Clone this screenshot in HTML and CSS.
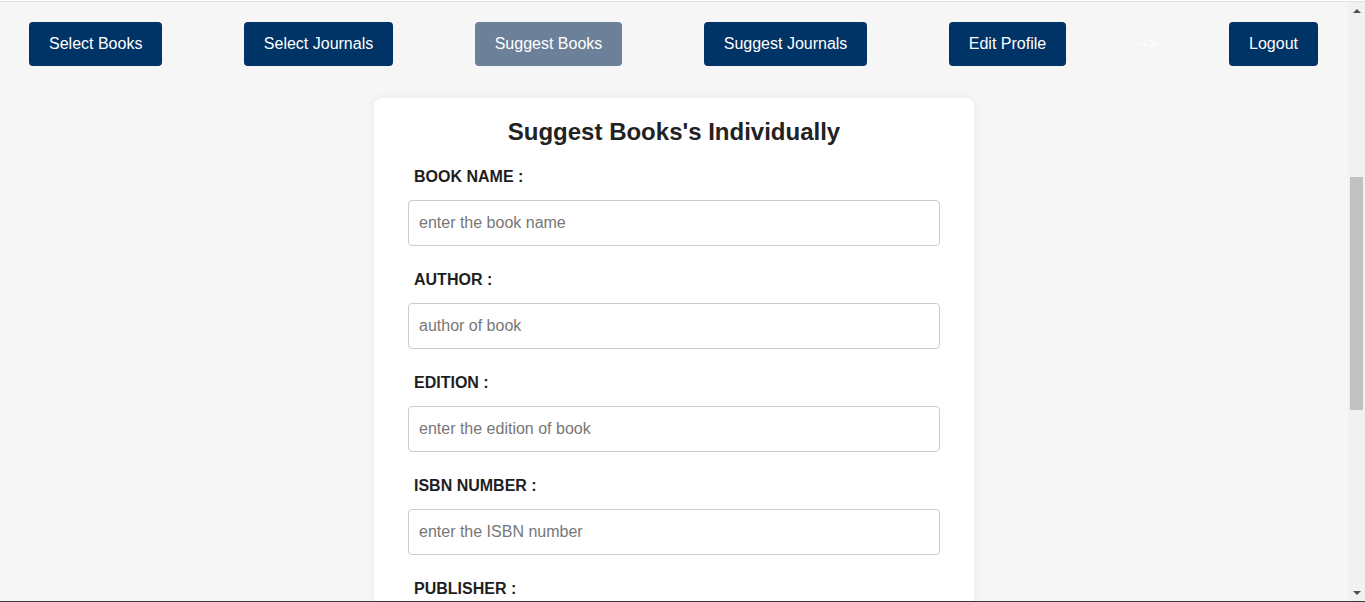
FILE: index.html
```html
<!DOCTYPE html>
<html lang="en">
<head>
<meta charset="utf-8">
<title>Suggest Books</title>
<link rel="stylesheet" href="styles.css">
</head>
<body>
<div class="topline"></div>
<div class="frame">
  <div class="page">
    <nav class="nav">
      <a class="nav-btn" href="#">Select Books</a>
      <a class="nav-btn" href="#">Select Journals</a>
      <a class="nav-btn active" href="#">Suggest Books</a>
      <a class="nav-btn" href="#">Suggest Journals</a>
      <a class="nav-btn" href="#">Edit Profile</a>
      <span class="nav-arrow"><span>--&gt;</span></span>
      <a class="nav-btn" href="#">Logout</a>
    </nav>
    <form class="card">
      <h2 class="card-title">Suggest Books's Individually</h2>
      <div class="field">
        <label class="field-label">BOOK NAME :</label>
        <input class="field-input" type="text" placeholder="enter the book name">
      </div>
      <div class="field">
        <label class="field-label">AUTHOR :</label>
        <input class="field-input" type="text" placeholder="author of book">
      </div>
      <div class="field">
        <label class="field-label">EDITION :</label>
        <input class="field-input" type="text" placeholder="enter the edition of book">
      </div>
      <div class="field">
        <label class="field-label">ISBN NUMBER :</label>
        <input class="field-input" type="text" placeholder="enter the ISBN number">
      </div>
      <div class="field">
        <label class="field-label">PUBLISHER :</label>
        <input class="field-input" type="text" placeholder="enter the publisher">
      </div>
    </form>
  </div>
  <div class="scrollbar">
    <div class="sb-arrow sb-up"></div>
    <div class="sb-track">
      <div class="sb-space"></div>
      <div class="sb-thumb"></div>
    </div>
    <div class="sb-arrow sb-down"></div>
  </div>
</div>
<div class="bottomline"></div>
</body>
</html>
```

FILE: styles.css
```css
html, body {
  margin: 0;
  padding: 0;
  height: 100%;
  overflow: hidden;
}
body {
  display: flex;
  flex-direction: column;
  font-family: "Liberation Sans", Arial, sans-serif;
  background: #f6f6f6;
  color: #222;
}
.topline {
  height: 1px;
  background: #ffffff;
  border-bottom: 1px solid #e2e2e2;
  flex: none;
}
.bottomline {
  height: 1px;
  background: #3a3a3a;
  flex: none;
}
.frame {
  flex: 1;
  display: flex;
  min-height: 0;
}
.page {
  flex: 1;
  overflow: hidden;
  background: #f6f6f6;
}
.nav {
  display: flex;
  justify-content: space-between;
  align-items: center;
  padding: 20px 30px 0 29px;
}
.nav-btn {
  display: block;
  background: #003366;
  color: #fff;
  text-decoration: none;
  font-size: 16px;
  line-height: 20px;
  padding: 12px 20px;
  border-radius: 4px;
}
.nav-btn.active {
  background: #6c8099;
}
.nav-arrow {
  width: 0;
  display: flex;
  justify-content: center;
  color: #fff;
  font-size: 16px;
  white-space: nowrap;
}
.card {
  width: 600px;
  margin: 32px auto 0;
  background: #fff;
  border-radius: 8px;
  box-shadow: 0 0 8px rgba(0, 0, 0, 0.06);
  padding: 20px 34px 40px;
  box-sizing: border-box;
}
.card-title {
  margin: 0 0 21px;
  text-align: center;
  font-size: 24px;
  line-height: 28px;
  font-weight: bold;
  color: #222;
}
.field {
  display: flex;
  flex-direction: column;
  margin-bottom: 24px;
}
.field-label {
  font-size: 16px;
  line-height: 20px;
  font-weight: bold;
  padding-left: 6px;
  color: #1e1e1e;
}
.field-input {
  margin-top: 13px;
  height: 46px;
  box-sizing: border-box;
  border: 1px solid #cccccc;
  border-radius: 4px;
  padding: 0 10px;
  font-family: "Liberation Sans", Arial, sans-serif;
  font-size: 16px;
  color: #222;
  background: #fff;
}
.field-input::placeholder {
  color: #777777;
}
.scrollbar {
  width: 17px;
  flex: none;
  background: #f1f1f1;
  display: flex;
  flex-direction: column;
}
.sb-arrow {
  height: 17px;
  flex: none;
  display: flex;
  align-items: center;
  justify-content: center;
}
.sb-up::before {
  content: "";
  border-left: 4px solid transparent;
  border-right: 4px solid transparent;
  border-bottom: 4px solid #505050;
}
.sb-down::before {
  content: "";
  border-left: 4px solid transparent;
  border-right: 4px solid transparent;
  border-top: 4px solid #505050;
}
.sb-track {
  flex: 1;
  display: flex;
  flex-direction: column;
  align-items: center;
}
.sb-space {
  height: 158px;
  flex: none;
}
.sb-thumb {
  width: 13px;
  height: 233px;
  background: #c1c1c1;
}
```
